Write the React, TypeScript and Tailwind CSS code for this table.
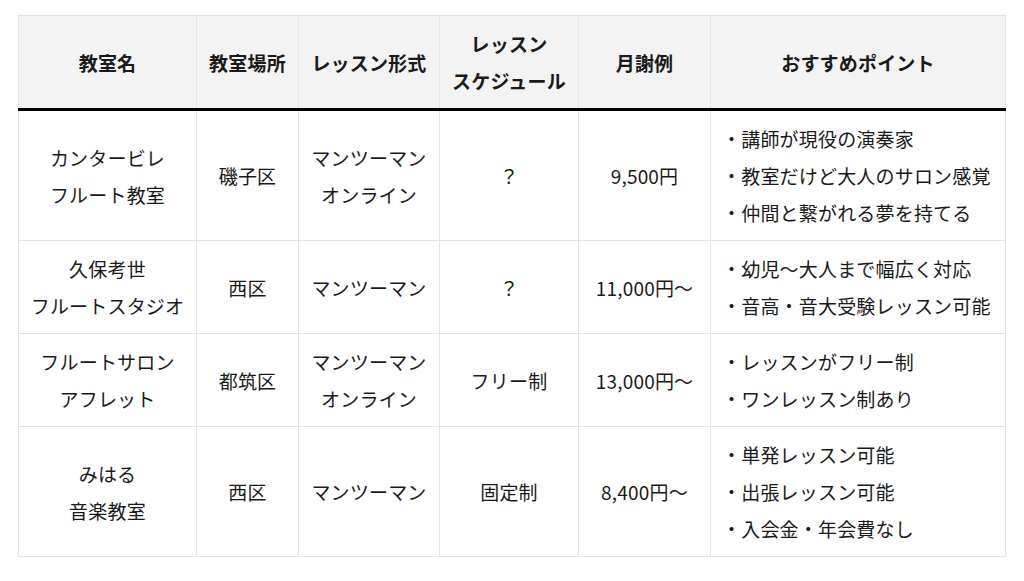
const headers = [
  { lines: ["教室名"], w: "w-[178px]" },
  { lines: ["教室場所"], w: "w-[102px]" },
  { lines: ["レッスン形式"], w: "w-[141px]" },
  { lines: ["レッスン", "スケジュール"], w: "w-[139px]" },
  { lines: ["月謝例"], w: "w-[132px]" },
  { lines: ["おすすめポイント"], w: "w-[295px]" },
];

const rows = [
  {
    name: ["カンタービレ", "フルート教室"],
    place: "磯子区",
    style: ["マンツーマン", "オンライン"],
    schedule: "？",
    fee: "9,500円",
    points: ["講師が現役の演奏家", "教室だけど大人のサロン感覚", "仲間と繋がれる夢を持てる"],
  },
  {
    name: ["久保考世", "フルートスタジオ"],
    place: "西区",
    style: ["マンツーマン"],
    schedule: "？",
    fee: "11,000円〜",
    points: ["幼児〜大人まで幅広く対応", "音高・音大受験レッスン可能"],
  },
  {
    name: ["フルートサロン", "アフレット"],
    place: "都筑区",
    style: ["マンツーマン", "オンライン"],
    schedule: "フリー制",
    fee: "13,000円〜",
    points: ["レッスンがフリー制", "ワンレッスン制あり"],
  },
  {
    name: ["みはる", "音楽教室"],
    place: "西区",
    style: ["マンツーマン"],
    schedule: "固定制",
    fee: "8,400円〜",
    points: ["単発レッスン可能", "出張レッスン可能", "入会金・年会費なし"],
  },
];

function Lines({ lines }: { lines: string[] }) {
  return (
    <>
      {lines.map((l) => (
        <div key={l}>{l}</div>
      ))}
    </>
  );
}

export default function App() {
  return (
    <div className="min-h-[581px] w-[1024px] bg-white pt-[15px] pl-[18px] font-['Noto_Sans_CJK_JP','Noto_Sans',sans-serif] text-[19px] tracking-[0.01em] text-[#1a1a1a]">
      <table className="w-[987px] table-fixed border-collapse leading-[37px]">
        <thead>
          <tr className="bg-[#f3f3f3]">
            {headers.map((h, i) => (
              <th
                key={i}
                className={`${h.w} border border-[#e4e4e4] border-b-[3px] border-b-black py-[9px] text-center align-middle font-bold`}
              >
                <Lines lines={h.lines} />
              </th>
            ))}
          </tr>
        </thead>
        <tbody>
          {rows.map((r, i) => (
            <tr key={i}>
              <td className="border border-[#e4e4e4] py-[9px] text-center align-middle">
                <Lines lines={r.name} />
              </td>
              <td className="border border-[#e4e4e4] py-[9px] text-center align-middle">{r.place}</td>
              <td className="border border-[#e4e4e4] py-[9px] text-center align-middle">
                <Lines lines={r.style} />
              </td>
              <td className="border border-[#e4e4e4] py-[9px] text-center align-middle">{r.schedule}</td>
              <td className="border border-[#e4e4e4] py-[9px] text-center align-middle">{r.fee}</td>
              <td className="border border-[#e4e4e4] py-[9px] pl-[11px] text-left align-middle">
                {r.points.map((p) => (
                  <div key={p} className="whitespace-nowrap">・{p}</div>
                ))}
              </td>
            </tr>
          ))}
        </tbody>
      </table>
    </div>
  );
}
